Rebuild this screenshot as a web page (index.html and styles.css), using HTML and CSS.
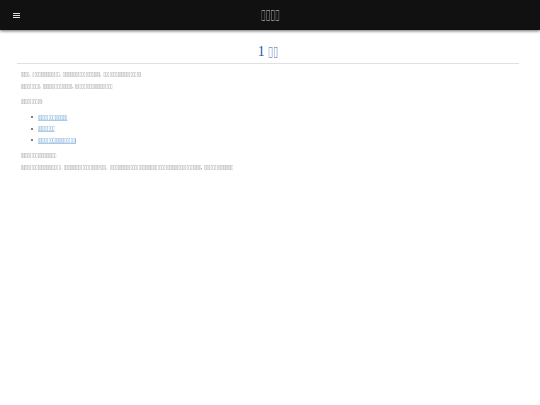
FILE: index.html
```html
<!DOCTYPE html>
<html lang="zh-CN">
<head>
    <meta charset="UTF-8">
    <title>1</title>
    <link rel="stylesheet" href="styles.css">
</head>
<body>

<div class="navbar">
    <div class="menu-icon"><span></span><span></span><span></span></div>
    <div class="navbar-title"><span>▯▯▯▯</span></div>
</div>

<div class="content">
    <h1>1 <span>▯▯</span></h1>
    <p>▯▯▯▯, ▯▯▯▯▯▯▯▯▯▯▯▯▯, ▯▯▯▯▯▯▯▯▯▯▯▯▯▯▯▯▯▯, ▯▯▯▯▯▯▯▯▯▯▯▯▯▯▯▯▯▯<br>▯▯▯▯▯▯▯▯▯, ▯▯▯▯▯▯▯▯▯▯▯▯▯▯, ▯▯▯▯▯▯▯▯▯▯▯▯▯▯▯▯▯▯</p>
    <p>▯▯▯▯▯▯▯▯▯▯:</p>
    <ul>
        <li><a href="#">▯▯▯▯▯▯▯▯▯▯▯▯▯▯</a></li>
        <li><a href="#">▯▯▯▯▯▯▯▯</a></li>
        <li><a href="#">▯▯▯▯▯▯▯(▯▯▯▯▯▯▯▯▯▯)</a></li>
    </ul>
    <p>▯▯▯▯▯▯▯▯▯▯▯▯▯▯▯▯▯<br>▯▯▯▯▯▯▯▯▯▯▯▯▯▯▯▯▯▯▯, ▯▯▯▯▯▯▯▯▯▯▯▯▯▯▯▯▯/▯▯▯, ▯▯▯▯▯▯▯▯▯▯▯▯▯▯▯▯▯▯▯▯▯▯▯▯▯▯▯▯▯▯▯▯▯▯▯▯▯▯▯▯▯▯▯▯, ▯▯▯▯▯▯▯▯▯▯▯▯▯▯</p>
</div>

</body>
</html>
```

FILE: styles.css
```css
body {
    margin: 0;
    font-family: "Liberation Serif", "DejaVu Sans", serif;
    background-color: #fff;
}

.navbar {
    height: 30px;
    background-color: #111;
    box-shadow: 0 1px 3px rgba(0, 0, 0, 0.6);
    display: flex;
    align-items: center;
    justify-content: center;
    position: relative;
}

.menu-icon {
    position: absolute;
    left: 12.5px;
    top: 12.5px;
    width: 7.5px;
    display: flex;
    flex-direction: column;
    gap: 1px;
}

.menu-icon span {
    height: 1.33px;
    background-color: #ddd;
}

.navbar-title {
    padding-bottom: 2px;
    color: #aaa;
    font-size: 14px;
}

.navbar-title span {
    display: block;
    width: 19px;
    white-space: nowrap;
    transform: scaleX(0.61);
    transform-origin: left;
    will-change: transform;
}

.content {
    padding: 13px 21px 0 17px;
}

h1 {
    margin: 0 0 5px;
    padding-bottom: 3px;
    border-bottom: 1px solid #e0e0e0;
    color: #1a55b0;
    font-size: 14px;
    font-weight: normal;
    text-align: center;
}

h1 span {
    display: inline-block;
    width: 10px;
    color: #6f90c4;
    white-space: nowrap;
    transform: scaleX(0.65);
    transform-origin: left;
    will-change: transform;
}

p {
    margin: 0 0 4px 4px;
    color: #777;
    font-size: 6px;
    line-height: 11.5px;
    word-spacing: 2px;
    transform: scaleX(0.63);
    transform-origin: left;
    will-change: transform;
}

ul {
    margin: 0 0 4px 4px;
    padding-left: 10px;
    font-size: 6px;
    list-style: none;
}

li {
    display: flex;
    align-items: center;
    gap: 5px;
    line-height: 11.5px;
}

li::before {
    content: "";
    width: 2px;
    height: 2px;
    border-radius: 50%;
    background-color: #555;
}

a {
    color: #4183c4;
    text-decoration-color: #a8cbe8;
    transform: scaleX(0.63);
    transform-origin: left;
    will-change: transform;
}
```
